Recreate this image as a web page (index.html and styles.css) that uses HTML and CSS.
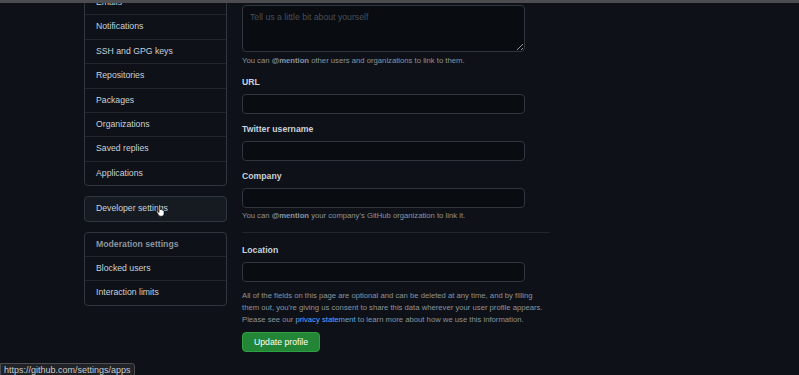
FILE: index.html
```html
<!DOCTYPE html>
<html lang="en">
<head>
  <meta charset="UTF-8" />
  <meta name="viewport" content="width=device-width, initial-scale=1.0" />
  <title>Public profile</title>
  <link rel="stylesheet" href="styles.css">
</head>
<body>
  <div class="chrome-bar"></div>
  <div class="layout">
    <!-- Menu lateral -->
    <nav class="sidebar">
      <div class="menu">
        <a class="menu-item" href="#">Emails</a>
        <a class="menu-item" href="#">Notifications</a>
        <a class="menu-item" href="#">SSH and GPG keys</a>
        <a class="menu-item" href="#">Repositories</a>
        <a class="menu-item" href="#">Packages</a>
        <a class="menu-item" href="#">Organizations</a>
        <a class="menu-item" href="#">Saved replies</a>
        <a class="menu-item" href="#">Applications</a>
      </div>
      <div class="menu menu-hover">
        <a class="menu-item" href="#">Developer settings</a>
        <svg class="cursor" width="11" height="13" viewBox="0 0 11 13">
          <path d="M3 1.2c0-.7 1.3-.7 1.3 0V6l.2-.6c.2-.6 1.2-.5 1.2.1v.6c.2-.6 1.2-.5 1.2.1v.6c.2-.5 1.1-.4 1.1.2V9.5c0 1.7-1 2.7-2.6 2.7H4.6c-1 0-1.6-.5-2.1-1.3L.6 7.8c-.4-.6.4-1.2.9-.7L3 8.5z" fill="#fff" stroke="#000" stroke-width=".6"/>
        </svg>
      </div>
      <div class="menu">
        <div class="menu-heading">Moderation settings</div>
        <a class="menu-item" href="#">Blocked users</a>
        <a class="menu-item" href="#">Interaction limits</a>
      </div>
    </nav>

    <!-- Formulario do perfil -->
    <main class="profile-form">
      <textarea class="field bio" placeholder="Tell us a little bit about yourself"></textarea>
      <p class="note">You can <strong>@mention</strong> other users and organizations to link to them.</p>

      <label class="label">URL</label>
      <input class="field" type="text">

      <label class="label">Twitter username</label>
      <input class="field" type="text">

      <label class="label">Company</label>
      <input class="field" type="text">
      <p class="note">You can <strong>@mention</strong> your company's GitHub organization to link it.</p>

      <hr class="divider">

      <label class="label">Location</label>
      <input class="field" type="text">

      <p class="disclaimer">All of the fields on this page are optional and can be deleted at any time, and by filling them out, you're giving us consent to share this data wherever your user profile appears. Please see our <a href="#">privacy statement</a> to learn more about how we use this information.</p>

      <button class="btn-update">Update profile</button>
    </main>
  </div>

  <div class="status-url">https://github.com/settings/apps</div>
</body>
</html>
```

FILE: styles.css
```css
:root {
  --bg: #0e1117;
  --bg-input: #090c10;
  --bg-hover: #161b22;
  --border: #30363d;
  --border-muted: #21262d;
  --text: #c9d1d9;
  --text-muted: #8b949e;
  --link: #58a6ff;
  --green: #238636;
}
* { margin: 0; padding: 0; box-sizing: border-box; }
body {
  background: var(--bg);
  color: var(--text);
  font-family: "Liberation Sans", Arial, sans-serif;
  font-size: 8.7px;
  overflow: hidden;
  height: 375px;
}
.chrome-bar {
  position: fixed;
  top: 0;
  left: 0;
  right: 0;
  height: 3px;
  background: #4b4d50;
  z-index: 5;
}
.layout {
  display: flex;
  align-items: flex-start;
  gap: 15px;
  margin-top: -10px;
  padding-left: 84px;
}
/* Menu lateral */
.sidebar { width: 143px; display: flex; flex-direction: column; gap: 10px; }
.menu {
  position: relative;
  border: 1px solid var(--border);
  border-radius: 4px;
}
.menu-item, .menu-heading {
  display: block;
  height: 24.4px;
  line-height: 23.4px;
  padding-left: 11px;
  border-top: 1px solid var(--border-muted);
  color: var(--text);
  text-decoration: none;
}
.menu > :first-child { border-top: none; height: 23.4px; }
.menu-heading { color: var(--text-muted); font-weight: bold; }
.menu-hover { background: var(--bg-hover); }
.cursor { position: absolute; left: 71px; top: 7px; }
/* Formulario */
.profile-form {
  width: 308px;
  margin-top: 15px;
  display: flex;
  flex-direction: column;
  align-items: flex-start;
}
.field {
  display: block;
  width: 283px;
  height: 20px;
  background: var(--bg-input);
  border: 1px solid var(--border);
  border-radius: 4px;
  color: var(--text);
  font-family: inherit;
  font-size: 8.7px;
  margin-bottom: 9px;
}
.bio { height: 47px; padding: 6px 7px; resize: vertical; margin-bottom: 3px; }
.bio::placeholder { color: #484f58; }
.note { font-size: 7.7px; line-height: 11px; color: var(--text-muted); margin-bottom: 6px; }
.note strong { color: var(--text-muted); }
.profile-form .field + .note { margin-top: -7px; }
.profile-form .bio + .note { margin-top: 0; }
.profile-form .note + .label { margin-top: 4px; }
.label {
  display: block;
  font-weight: bold;
  line-height: 12px;
  margin-bottom: 6px;
}
.divider {
  width: 308px;
  border: none;
  border-top: 1px solid var(--border-muted);
  margin: 5px 0 11px;
}
.disclaimer {
  font-size: 7.7px;
  line-height: 12px;
  color: var(--text-muted);
  margin-top: -1px;
  width: 306px;
}
.disclaimer a { color: var(--link); text-decoration: none; }
.btn-update {
  margin-top: 6px;
  height: 20px;
  padding: 0 11px;
  background: var(--green);
  color: #fff;
  border: 1px solid #2ea043;
  border-radius: 4px;
  font-family: inherit;
  font-size: 8.7px;
}
.status-url {
  position: fixed;
  left: 0;
  bottom: -4px;
  padding: 1px 3px 3px;
  background: #202226;
  border: 1px solid #4b4d50;
  border-radius: 0 3px 0 0;
  color: #c9cbcf;
  font-size: 9px;
}
```
